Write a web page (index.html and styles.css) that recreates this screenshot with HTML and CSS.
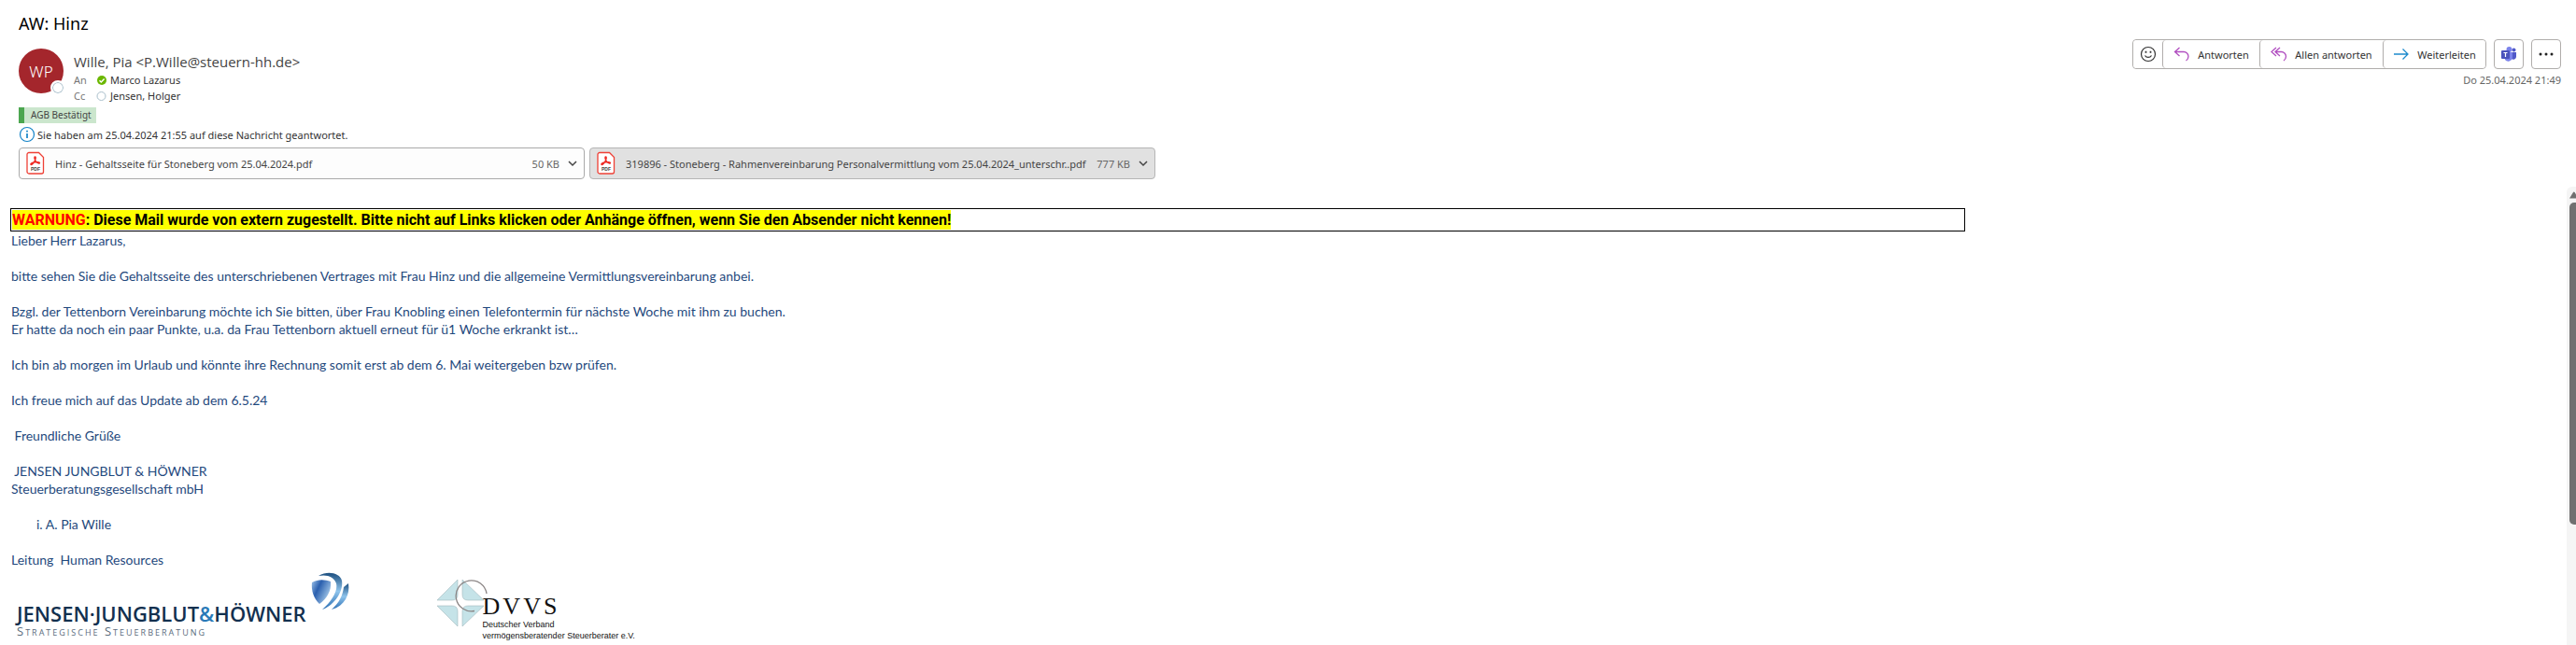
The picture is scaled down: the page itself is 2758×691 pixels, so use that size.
FILE: index.html
```html
<!DOCTYPE html>
<html lang="de">
<head>
<meta charset="utf-8">
<title>AW: Hinz</title>
<link rel="stylesheet" href="styles.css">
</head>
<body>
<div class="mail">
  <header class="head">
    <h1 class="subject">AW: Hinz</h1>
    <div class="top">
      <div class="sender">
        <div class="avatar"><span>WP</span><i class="avatar-presence"></i></div>
        <div class="people">
          <div class="from">Wille, Pia &lt;P.Wille@steuern-hh.de&gt;</div>
          <div class="line"><span class="label">An</span>
            <svg class="presence" viewBox="0 0 12 12"><circle cx="6" cy="6" r="5" fill="#6bb700"/><path d="M3.5 6.2 5.3 8 8.6 4.6" fill="none" stroke="#fff" stroke-width="1.4"/></svg>
            <span>Marco Lazarus</span></div>
          <div class="line"><span class="label">Cc</span>
            <svg class="presence" viewBox="0 0 12 12"><circle cx="5.500" cy="6" r="4.500" fill="#fff" stroke="#a9bfcb"/></svg>
            <span>Jensen, Holger</span></div>
        </div>
      </div>
      <div class="actions">
        <div class="buttons">
          <div class="group">
            <button class="btn emoji" aria-label="Reagieren"><svg width="18" height="18" viewBox="0 0 18 18" fill="none" stroke="#333" stroke-width="1.2"><circle cx="9" cy="9" r="7.500"/><path d="M5.500 10.500c1.500 2.600 5.500 2.600 7 0"/><path d="M6.500 5.800v2M11.500 5.800v2" stroke-width="1.700"/></svg></button>
            <button class="btn reply"><svg width="18" height="18" viewBox="0 0 18 18" fill="none" stroke="#b14fc0" stroke-width="1.300"><path d="M6.500 2 1.500 6.500l5 4.500M1.500 6.500h9.500a5 5 0 0 1 5 5c0 2-1 3.500-2.500 4.500"/></svg>Antworten</button>
            <button class="btn all"><svg width="18" height="18" viewBox="0 0 18 18" fill="none" stroke="#b14fc0" stroke-width="1.300"><path d="M6 2 1 6.500 6 11M10 2 5 6.500l5 4.500M5 6.500h6.500a5 5 0 0 1 5 5c0 2-1 3.500-2.500 4.500"/></svg>Allen antworten</button>
            <button class="btn forward"><svg width="18" height="18" viewBox="0 0 18 18" fill="none" stroke="#1e8bcd" stroke-width="1.300"><path d="M1 9h15M10.500 3.500 16 9l-5.500 5.500"/></svg>Weiterleiten</button>
          </div>
          <button class="btn square" aria-label="Teams"><svg width="18" height="18" viewBox="0 0 18 18"><circle cx="9.500" cy="4" r="3" fill="#7b83eb"/><circle cx="14.500" cy="4.500" r="2" fill="#5059c9"/><path d="M12 7h5v5a3 3 0 0 1-5 2z" fill="#5059c9"/><path d="M5 7h8v6a4.500 4.500 0 0 1-8 2z" fill="#7b83eb"/><rect x="1" y="5" width="9" height="9" rx="1" fill="#4b53bc"/><path d="M3.500 7.500h4M5.500 7.500v4.500" stroke="#fff" stroke-width="1.200"/></svg></button>
          <button class="btn square" aria-label="Weitere Aktionen"><svg width="18" height="18" viewBox="0 0 18 18" fill="#222"><circle cx="3" cy="9" r="1.500"/><circle cx="9" cy="9" r="1.500"/><circle cx="15" cy="9" r="1.500"/></svg></button>
        </div>
        <time class="date">Do 25.04.2024 21:49</time>
      </div>
    </div>
    <div class="category">AGB Bestätigt</div>
    <div class="info"><svg width="18" height="18" viewBox="0 0 18 18" fill="none" stroke="#1583c7"><circle cx="9" cy="9" r="7.500" stroke-width="1.200"/><path d="M9 8v5M9 4.800v1.700" stroke-width="1.700"/></svg><span>Sie haben am 25.04.2024 21:55 auf diese Nachricht geantwortet.</span></div>
    <div class="files">
      <button class="file"><svg class="pdf" width="20" height="26" viewBox="0 0 20 26"><path d="M3 1.500h10.500l5 5V22a2 2 0 0 1-2 2H3a2 2 0 0 1-2-2V3.500a2 2 0 0 1 2-2z" fill="#fff" stroke="#ee4036" stroke-width="1.300"/><path d="M9.500 6c1.500 0 .3 3.500-1.200 6-1 1.600-2.600 2.800-3.300 2.300-.7-.8 1.500-2 4-2.500 2.500-.4 5.500-.3 5.500.7 0 1-2.500.3-4-1.500C9.200 9.500 8.300 6 9.500 6z" fill="none" stroke="#ee2a24" stroke-width="1.400"/><text x="10" y="21" class="pdf-text">PDF</text></svg><span class="name">Hinz - Gehaltsseite für Stoneberg vom 25.04.2024.pdf</span><span class="size">50 KB</span><svg width="10" height="7" viewBox="0 0 10 7" fill="none" stroke="#444" stroke-width="1.500"><path d="M1 1l4 4 4-4"/></svg></button>
      <button class="file selected"><svg class="pdf" width="20" height="26" viewBox="0 0 20 26"><path d="M3 1.500h10.500l5 5V22a2 2 0 0 1-2 2H3a2 2 0 0 1-2-2V3.500a2 2 0 0 1 2-2z" fill="#fff" stroke="#ee4036" stroke-width="1.300"/><path d="M9.500 6c1.500 0 .3 3.500-1.200 6-1 1.600-2.600 2.800-3.300 2.300-.7-.8 1.500-2 4-2.500 2.500-.4 5.500-.3 5.500.7 0 1-2.500.3-4-1.500C9.200 9.500 8.300 6 9.500 6z" fill="none" stroke="#ee2a24" stroke-width="1.400"/><text x="10" y="21" class="pdf-text">PDF</text></svg><span class="name">319896 - Stoneberg - Rahmenvereinbarung Personalvermittlung vom 25.04.2024_unterschr..pdf</span><span class="size">777 KB</span><svg width="10" height="7" viewBox="0 0 10 7" fill="none" stroke="#444" stroke-width="1.500"><path d="M1 1l4 4 4-4"/></svg></button>
    </div>
  </header>
  <div class="pane">
    <main class="body">
      <div class="warning"><strong class="mark"><span class="red">WARNUNG</span>: Diese Mail wurde von extern zugestellt. Bitte nicht auf Links klicken oder Anhänge öffnen, wenn Sie den Absender nicht kennen!</strong></div>
      <p>Lieber Herr Lazarus,</p>
      <p>bitte sehen Sie die Gehaltsseite des unterschriebenen Vertrages mit Frau Hinz und die allgemeine Vermittlungsvereinbarung anbei.</p>
      <p>Bzgl. der Tettenborn Vereinbarung möchte ich Sie bitten, über Frau Knobling einen Telefontermin für nächste Woche mit ihm zu buchen.<br>Er hatte da noch ein paar Punkte, u.a. da Frau Tettenborn aktuell erneut für ü1 Woche erkrankt ist…</p>
      <p>Ich bin ab morgen im Urlaub und könnte ihre Rechnung somit erst ab dem 6. Mai weitergeben bzw prüfen.</p>
      <p>Ich freue mich auf das Update ab dem 6.5.24</p>
      <p>&nbsp;Freundliche Grüße</p>
      <p>&nbsp;JENSEN JUNGBLUT &amp; HÖWNER<br>Steuerberatungsgesellschaft mbH</p>
      <p class="signer">i. A. Pia Wille</p>
      <p>Leitung&nbsp; Human Resources</p>
      <div class="logos">
        <div class="jjh">
          <div class="jjh-name"><span>JENSEN·JUNGBLUT<b class="amp">&amp;</b>HÖWNER</span><small>Strategische Steuerberatung</small></div>
          <svg class="swoosh" width="42" height="44" viewBox="0 0 42 44">
            <defs><linearGradient id="shield" x1="0" y1="0" x2="1" y2=".6"><stop offset="0" stop-color="#9cc3ea"/><stop offset=".4" stop-color="#2a5fae"/><stop offset="1" stop-color="#a9cdec"/></linearGradient><linearGradient id="arc" x1="0" y1="0" x2="0" y2="1"><stop offset="0" stop-color="#1c4f80"/><stop offset=".5" stop-color="#8fc4ec"/><stop offset="1" stop-color="#2c6fb4"/></linearGradient></defs>
            <path d="M1 11C8 7 15 8 21 10c1 10-4 18-12 24C3 28 0 20 1 11z" fill="url(#shield)"/>
            <path d="M8 4C18-2 31 1 33 9c2 12-9 27-21 31 10-9 17-20 15-28C25 5 17 2 8 4z" fill="url(#arc)"/>
            <path d="M40 12c2 12-4 24-18 28 8-7 12-15 13-24z" fill="url(#arc)"/>
          </svg>
        </div>
        <div class="dvvs">
          <svg width="56" height="54" viewBox="0 0 56 54">
            <g fill="#c5e3e8" stroke="#a3b8bd" stroke-width=".6"><path d="M23 1v16q0 6-6 6H1z"/><path d="M28 1v16q0 6 6 6h17z"/><path d="M23 51V35q0-6-6-6H1z"/><path d="M28 51V35q0-6 6-6h17z"/></g>
            <path d="M54 16A16.500 16.500 0 1 0 41 34.500" fill="none" stroke="#8b8585" stroke-width="1.300"/>
          </svg>
          <div class="dvvs-text"><b>DVVS</b><span>Deutscher Verband</span><span>vermögensberatender Steuerberater e.V.</span></div>
        </div>
      </div>
    </main>
    <div class="scroll"><svg width="10" height="8" viewBox="0 0 10 8"><path d="M3 7.500 7 1q.8-1 1.600 0l4 6.500z" fill="#707070"/></svg><div class="thumb"></div></div>
  </div>
</div>
</body>
</html>
```
FILE: styles.css
```css
* { box-sizing: border-box; }
body { margin: 0; background: #fff; color: #333; font: 11px/17px "Noto Sans", "Open Sans", sans-serif; }
button { font: inherit; color: inherit; }
svg { flex: none; display: block; }
.mail { height: 100vh; display: flex; flex-direction: column; overflow: hidden; }
.head { padding: 12px 16px 0 20px; }
.subject { margin: 0; font-size: 18px; line-height: 26px; font-weight: 400; color: #000; }
.top { display: flex; justify-content: space-between; padding-top: 4px; }
.sender { display: flex; gap: 11px; padding-top: 10px; }
.avatar { position: relative; width: 48px; height: 48px; border-radius: 50%; background: #a4262c; color: #fff; font-size: 17px; font-weight: 300; display: flex; align-items: center; justify-content: center; }
.avatar-presence { position: absolute; right: -2px; bottom: -2px; width: 16px; height: 16px; border-radius: 50%; border: 2px solid #fff; background: #fff; box-shadow: inset 0 0 0 1px #a9bfcb; }
.people { padding-top: 3px; }
.from { font-family: "Open Sans", sans-serif; font-size: 15px; line-height: 22px; color: #444; }
.line { display: flex; align-items: center; }
.label { width: 24px; color: #777; }
.presence { width: 12px; height: 12px; margin-right: 3px; }
.actions { display: flex; flex-direction: column; align-items: flex-end; gap: 3px; }
.buttons { display: flex; gap: 8px; }
.group { display: flex; border: 1px solid #b0adab; border-radius: 4px; }
.btn { height: 32px; background: #fff; border: 1px solid #b0adab; border-radius: 4px; padding: 0; display: flex; align-items: center; justify-content: center; }
.group .btn { height: 30px; border: 0; border-left: 1px solid #b0adab; gap: 8px; }
.group .btn:first-child { border-left: 0; }
.emoji { width: 31px; }
.group .reply { width: 104px; }
.group .all { width: 132px; }
.group .forward { width: 110px; }
.square { width: 32px; }
.date { color: #666; }
.category { width: max-content; margin-top: 4px; padding: 0 5px 0 7px; border-left: 6px solid #4ba64f; background: #cbe6cd; color: #444; font-size: 10px; line-height: 17px; }
.info { display: flex; gap: 2px; align-items: center; height: 24px; }
.files { display: flex; gap: 5px; margin-top: 2px; }
.file { flex: 0 1 606px; min-width: 0; height: 34px; display: flex; align-items: center; padding: 0 7px; background: #fdfdfd; border: 1px solid #aaa; border-radius: 4px; text-align: left; color: #444; white-space: nowrap; }
.file.selected { background: #e1e1e1; border-color: #b5b5b5; }
.pdf-text { font: bold 5px "Liberation Sans", sans-serif; fill: #444; text-anchor: middle; }
.name { flex: 1; min-width: 0; margin-left: 11px; }
.size { margin-right: 9px; color: #666; }
.pane { flex: 1; min-height: 0; display: flex; justify-content: space-between; margin-top: 8px; }
.body { flex: 0 0 76.3%; padding: 23px 0 0 11px; color: #1f497d; font: 14px/19px Lato, sans-serif; }
.warning { height: 25px; border: 1px solid #000; padding: 1px; color: #000; font: 16px/21px Roboto, sans-serif; }
.mark { display: inline-block; background: #ff0; }
.red { color: #f00; }
.body p { margin: 0 1px 19px; }
.body .signer { padding-left: 27px; }
.logos { display: flex; gap: 92px; margin-top: -15px; padding-left: 7px; }
.jjh { display: flex; gap: 5px; }
.jjh-name { padding-top: 32px; color: #12304f; font: 600 22px/24px "Open Sans", sans-serif; }
.jjh-name span, .jjh-name small { display: block; }
.amp { color: #2a7ab8; font-weight: 600; }
.jjh-name small { font-size: 13px; line-height: 14px; font-weight: 500; font-variant: small-caps; letter-spacing: 2px; color: #5a6b7c; }
.dvvs { display: flex; padding-top: 7px; }
.dvvs-text { margin-left: -6px; padding-top: 17px; color: #111; font: 9px/12px "Liberation Sans", sans-serif; }
.dvvs-text b { display: block; font: 26px/26px "Liberation Serif", serif; letter-spacing: 3px; }
.dvvs-text span { display: block; white-space: nowrap; }
.scroll { width: 10px; background: #f5f5f5; border-top-left-radius: 6px; padding-top: 5px; overflow: hidden; }
.thumb { width: 14px; height: 71%; margin: 4px 0 0 3px; background: #707070; border-radius: 5px; }
```
